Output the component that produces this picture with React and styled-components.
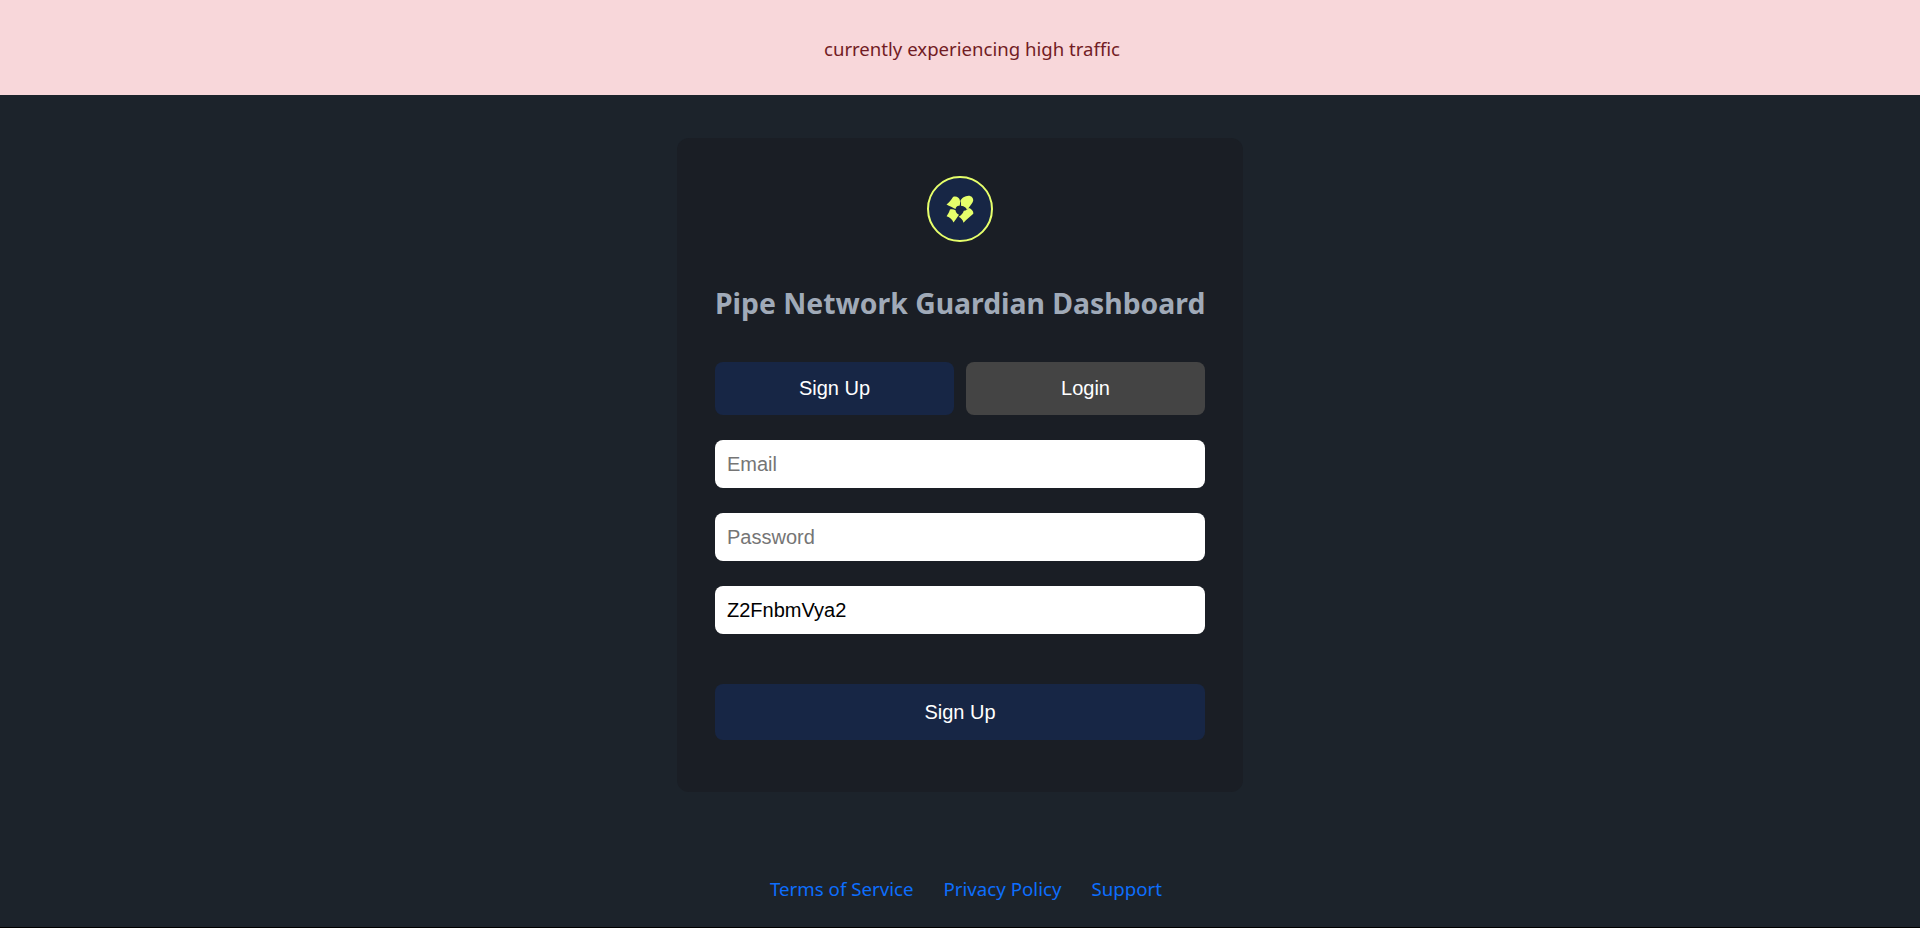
import React from 'react'
import styled, {createGlobalStyle} from 'styled-components'

const GlobalStyle = createGlobalStyle`
  html, body {
    margin: 0;
    padding: 0;
    background: #000;
  }
  * {
    box-sizing: border-box;
  }
`

const Page = styled.div`
  height: 927px;
  background: #1c232b;
  display: flex;
  flex-direction: column;
  align-items: center;
  overflow: hidden;
`

const Banner = styled.div`
  width: 100%;
  height: 95px;
  padding-top: 36px;
  padding-left: 24px;
  background: #f8d7da;
  color: #721c24;
  font-family: "Noto Sans", sans-serif;
  font-size: 18.6px;
  line-height: 26px;
  text-align: center;
`

const Card = styled.div`
  width: 566px;
  height: 654px;
  margin-top: 43px;
  padding: 38px;
  background: #1a1e25;
  border-radius: 12px;
  display: flex;
  flex-direction: column;
`

const LogoCircle = styled.div`
  width: 66px;
  height: 66px;
  align-self: center;
  border: 2px solid #e6ff6b;
  border-radius: 50%;
  background: #172645;
  display: flex;
  align-items: center;
  justify-content: center;
`

const Title = styled.h1`
  margin: 42px 0 0;
  color: #a0aab8;
  font-family: "Noto Sans", sans-serif;
  font-size: 28.35px;
  line-height: 38px;
  font-weight: 700;
  text-align: center;
  white-space: nowrap;
`

const Tabs = styled.div`
  margin-top: 40px;
  display: flex;
  gap: 12px;
`

const Tab = styled.button`
  flex: 1;
  height: 53px;
  border: 0;
  border-radius: 8px;
  background: ${props => props.active ? '#172645' : '#444444'};
  color: #fff;
  font-family: "Liberation Sans", sans-serif;
  font-size: 20px;
`

const Field = styled.input`
  display: block;
  width: 100%;
  height: 48px;
  margin-top: 25px;
  padding: 0 12px;
  border: 0;
  border-radius: 8px;
  background: #fff;
  color: #000;
  font-family: "Liberation Sans", sans-serif;
  font-size: 20px;
  &::placeholder {
    color: #757575;
    opacity: 1;
  }
`

const Submit = styled.button`
  width: 100%;
  height: 56px;
  margin-top: 50px;
  border: 0;
  border-radius: 8px;
  background: #172645;
  color: #fff;
  font-family: "Liberation Sans", sans-serif;
  font-size: 20px;
`

const Footer = styled.div`
  margin-top: 83px;
  padding-left: 12px;
  display: flex;
  gap: 30px;
`

const FooterLink = styled.a`
  color: #0d6efd;
  font-family: "Noto Sans", sans-serif;
  font-size: 18.7px;
  line-height: 28px;
  text-decoration: none;
`

const Logo = () => (
  <svg width='28' height='28' viewBox='0 0 28 28' fill='#e6ff6b'>
    <path d='M0.5 9.5 C3 8 5 5 7 2 C10 0.8 13.8 2.5 14 6 C14.2 8 14 10 13.5 10.8 C11 10.5 10 12 9.5 14 C7 12.5 3.5 11 0.5 9.5 Z' />
    <path d='M14.3 6 C15.5 3 19 1 22.5 0.8 C25.5 0.8 27.5 3 27.2 5.8 C26.5 8.5 24 11 21 15 C20.5 13 18.5 11 15 10.8 C15.2 9 15 7 14.3 6 Z' />
    <path d='M0.6 21.2 C2.2 19 3.2 17 4 14.6 C6 14 8 14.4 9.5 15.2 C9.8 17.5 11 19 13 19.8 C11.5 22 9.5 25 7.5 27.5 C6.5 24.5 4 22.2 0.6 21.2 Z' />
    <path d='M12.6 21.8 C15 20.5 17 18.5 17.8 15.8 C20 15.5 22 14.5 22.5 13 C25.5 13.8 27.6 16 27.3 18.8 C24.5 21.5 20.5 24.5 17.5 27.8 C17 25 15 23 12.6 21.8 Z' />
  </svg>
)

export default function App () {
  return <Page>
    <GlobalStyle />
    <Banner>currently experiencing high traffic</Banner>
    <Card>
      <LogoCircle>
        <Logo />
      </LogoCircle>
      <Title>Pipe Network Guardian Dashboard</Title>
      <Tabs>
        <Tab active>Sign Up</Tab>
        <Tab>Login</Tab>
      </Tabs>
      <Field placeholder='Email' />
      <Field placeholder='Password' />
      <Field defaultValue='Z2FnbmVya2' />
      <Submit>Sign Up</Submit>
    </Card>
    <Footer>
      <FooterLink href='#'>Terms of Service</FooterLink>
      <FooterLink href='#'>Privacy Policy</FooterLink>
      <FooterLink href='#'>Support</FooterLink>
    </Footer>
  </Page>
}
